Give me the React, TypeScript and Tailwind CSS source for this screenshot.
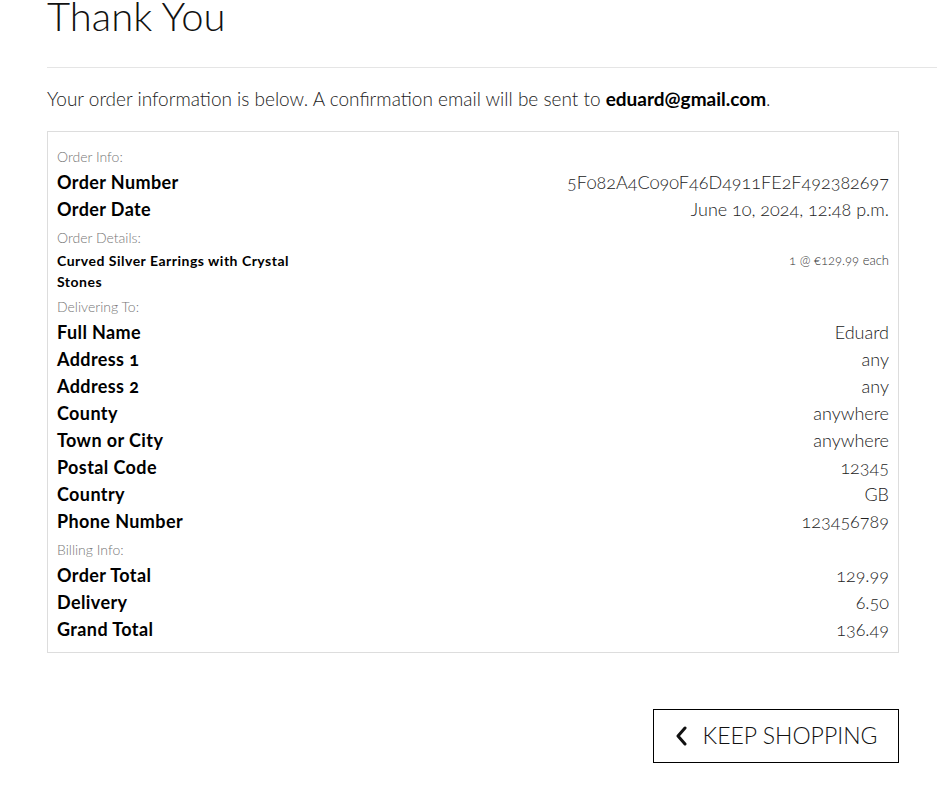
import React from "react";

const orderInfo = [
  { label: "Order Number", value: "5F082A4C090F46D4911FE2F492382697" },
  { label: "Order Date", value: "June 10, 2024, 12:48 p.m." },
];

const delivery = [
  { label: "Full Name", value: "Eduard" },
  { label: "Address 1", value: "any" },
  { label: "Address 2", value: "any" },
  { label: "County", value: "anywhere" },
  { label: "Town or City", value: "anywhere" },
  { label: "Postal Code", value: "12345" },
  { label: "Country", value: "GB" },
  { label: "Phone Number", value: "123456789" },
];

const billing = [
  { label: "Order Total", value: "129.99" },
  { label: "Delivery", value: "6.50" },
  { label: "Grand Total", value: "136.49" },
];

function Row({ label, value }: { label: string; value: string }) {
  return (
    <div className="flex justify-between items-center h-[27px]">
      <span className="text-[18px] font-bold tracking-[0.4px] text-black">{label}</span>
      <span className="text-[18px] font-light text-[#222]">{value}</span>
    </div>
  );
}

function Heading({ children }: { children: React.ReactNode }) {
  return <div className="text-[14px] font-light text-[#777] h-[25px] flex items-center mt-[2px]">{children}</div>;
}

export default function App() {
  return (
    <div className="min-h-screen bg-white text-black font-['Lato','Noto_Sans',sans-serif] [font-variant-numeric:oldstyle-nums] overflow-hidden">
      <div className="pl-[47px]">
        <h1 className="text-[40px] font-light leading-none text-[#111] -mt-[4px] h-[42px]">Thank You</h1>
        <hr className="border-0 border-t border-[#e5e5e5] mt-[29px] w-[920px]" />
        <p className="text-[19px] font-light mt-[17px] text-[#222]">
          Your order information is below. A confirmation email will be sent to{" "}
          <strong className="font-bold text-black">eduard@gmail.com</strong>.
        </p>

        <div className="w-[852px] border border-[#ddd] mt-[17px] px-[9px] pt-[10px] pb-[9px]">
          <Heading>Order Info:</Heading>
          {orderInfo.map(r => (
            <Row key={r.label} {...r} />
          ))}

          <Heading>Order Details:</Heading>
          <div className="flex justify-between items-start">
            <span className="w-[250px] text-[14px] font-bold tracking-[0.5px] leading-[21px]">
              Curved Silver Earrings with Crystal Stones
            </span>
            <span className="text-[13px] font-light text-[#333] leading-[21px]">1 @ €129.99 each</span>
          </div>

          <Heading>Delivering To:</Heading>
          {delivery.map(r => (
            <Row key={r.label} {...r} />
          ))}

          <Heading>Billing Info:</Heading>
          {billing.map(r => (
            <Row key={r.label} {...r} />
          ))}
        </div>

        <div className="w-[852px] flex justify-end mt-[56px]">
          <button className="w-[246px] h-[54px] border border-black flex items-center justify-center gap-[14px] text-[23px] font-light text-[#111] uppercase">
            <svg width="14" height="20" viewBox="0 0 14 20" fill="none" stroke="#111" strokeWidth="3" strokeLinecap="round" strokeLinejoin="round">
              <path d="M10 2 L3 10 L10 18" />
            </svg>
            Keep Shopping
          </button>
        </div>
      </div>
    </div>
  );
}
